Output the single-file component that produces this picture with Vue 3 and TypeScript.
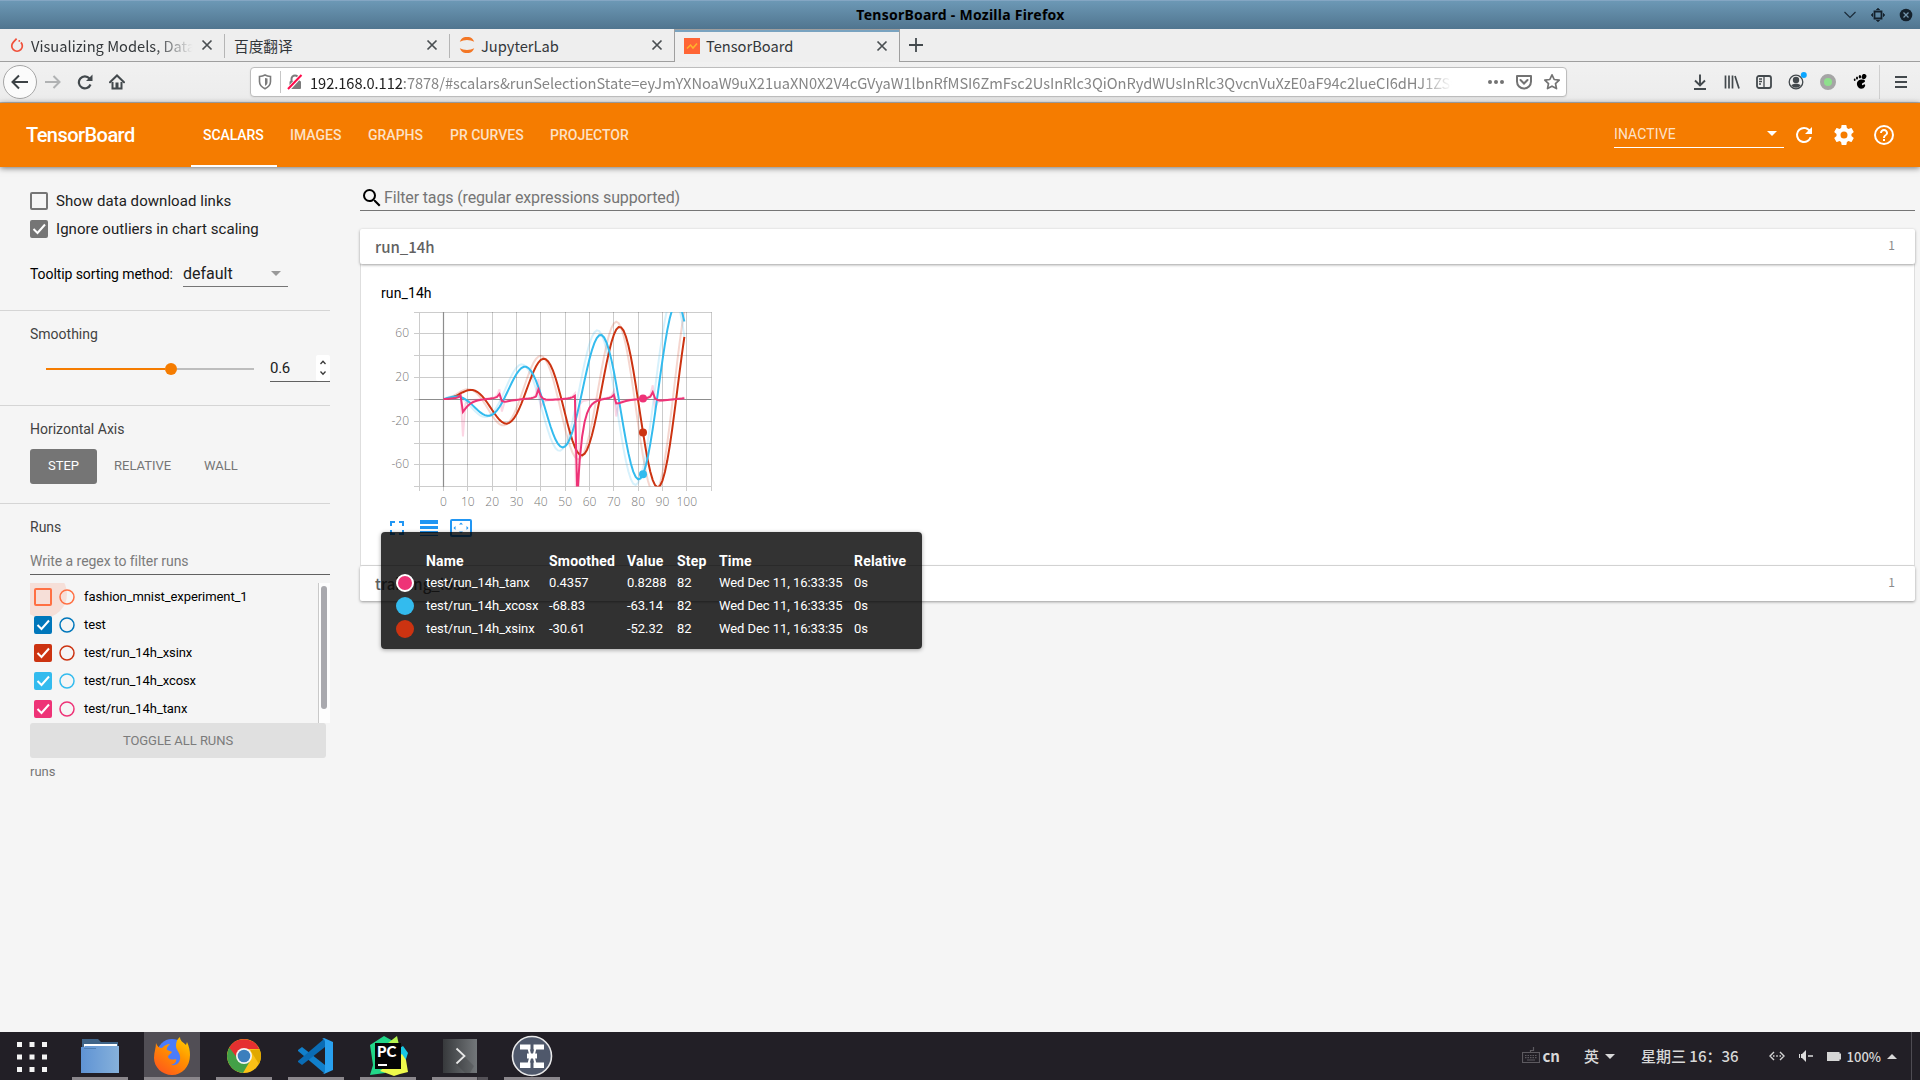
<script setup lang="ts">
interface BrowserTab { title: string; icon: string; width: number; active?: boolean }
interface Run { name: string; color: string; checked: boolean }
interface Series { name: string; color: string; raw: string; smooth: string; dotX: number; dotY: number }

const browserTabs: BrowserTab[] = [
  { title: 'Visualizing Models, Data,', icon: 'torch', width: 225 },
  { title: '百度翻译', icon: '', width: 225 },
  { title: 'JupyterLab', icon: 'jupyter', width: 224 },
  { title: 'TensorBoard', icon: 'board', width: 226, active: true },
]

const host = '192.168.0.112'
const path =
  ':7878/#scalars&runSelectionState=eyJmYXNoaW9uX21uaXN0X2V4cGVyaW1lbnRfMSI6ZmFsc2UsInRlc3QiOnRydWUsInRlc3QvcnVuXzE0aF94c2lueCI6dHJ1ZSw'

const pages = [
  { label: 'SCALARS', width: 86 },
  { label: 'IMAGES', width: 78 },
  { label: 'GRAPHS', width: 82 },
  { label: 'PR CURVES', width: 100 },
  { label: 'PROJECTOR', width: 108 },
]

const runs: Run[] = [
  { name: 'fashion_mnist_experiment_1', color: '#ff7043', checked: false },
  { name: 'test', color: '#0077bb', checked: true },
  { name: 'test/run_14h_xsinx', color: '#cc3311', checked: true },
  { name: 'test/run_14h_xcosx', color: '#33bbee', checked: true },
  { name: 'test/run_14h_tanx', color: '#ee3377', checked: true },
]

const tooltipRows = [
  { color: '#ee3377', near: true, cells: ['test/run_14h_tanx', '0.4357', '0.8288', '82', 'Wed Dec 11, 16:33:35', '0s'] },
  { color: '#33bbee', near: false, cells: ['test/run_14h_xcosx', '-68.83', '-63.14', '82', 'Wed Dec 11, 16:33:35', '0s'] },
  { color: '#cc3311', near: false, cells: ['test/run_14h_xsinx', '-30.61', '-52.32', '82', 'Wed Dec 11, 16:33:35', '0s'] },
]

// Chart scales: the plot area starts at (38, 8) inside the svg.
const sx = (v: number): number => 62.5 + v * 2.433
const sy = (v: number): number => 95.1 - v * 1.0915
const gx = (v: number): number => Math.floor(sx(v)) + 0.5
const gy = (v: number): number => Math.floor(sy(v) + 0.25) + 0.5
const smoothing = 0.6
const hovered = 82

function toPath(values: number[]): string {
  return values.map((v, i) => `${i ? 'L' : 'M'}${sx(i).toFixed(2)} ${sy(v).toFixed(2)}`).join('')
}

function smooth(values: number[]): number[] {
  let last = 0
  return values.map((v, i) => {
    last = last * smoothing + (1 - smoothing) * v
    return last / (1 - Math.pow(smoothing, i + 1))
  })
}

function makeSeries(name: string, color: string, fn: (i: number) => number): Series {
  const values = Array.from({ length: 100 }, (_, i) => fn(i))
  const s = smooth(values)
  return { name, color, raw: toPath(values), smooth: toPath(s), dotX: sx(hovered), dotY: sy(s[hovered]) }
}

const series: Series[] = [
  makeSeries('xsinx', '#cc3311', (i) => i * Math.sin(i / 5)),
  makeSeries('xcosx', '#33bbee', (i) => i * Math.cos(i / 5)),
  makeSeries('tanx', '#ee3377', (i) => Math.tan(i / 5)),
]

const xTicks = Array.from({ length: 13 }, (_, i) => (i - 1) * 10)
const yTicks = Array.from({ length: 9 }, (_, i) => (i - 4) * 20)
const xLabels = Array.from({ length: 11 }, (_, i) => i * 10)
const yLabels = [60, 20, -20, -60]
</script>

<template>
  <div class="screen">
    <header class="titlebar">
      <span class="side"></span>
      <span class="wintitle">TensorBoard - Mozilla Firefox</span>
      <span class="side winbtns">
        <svg width="14" height="14" viewBox="0 0 14 14"><path d="M1.500 4l5.500 5.500L12.500 4" fill="none" stroke="#1c2c3a" stroke-width="1.200" /></svg>
        <svg width="14" height="14" viewBox="0 0 14 14"><path d="M3.500 3.500h7v7h-7z" fill="none" stroke="#14212c" stroke-width="1.800" /><path d="M5.500 1.500L7 0.500l1.500 1zM5.500 12.500L7 13.500l1.500-1zM1.500 5.500L0.500 7l1 1.500zM12.500 5.500L13.500 7l-1 1.500z" fill="#14212c" stroke="#14212c" /></svg>
        <svg width="14" height="14" viewBox="0 0 14 14"><circle cx="7" cy="7" r="6.300" fill="#14212c" /><path d="M4.500 4.500l5 5M9.500 4.500l-5 5" stroke="#7596ad" stroke-width="1.300" /></svg>
      </span>
    </header>

    <nav class="tabstrip">
      <div v-for="t in browserTabs" :key="t.title" class="btab" :class="{ active: t.active }" :style="{ width: t.width + 'px' }">
        <svg v-if="t.icon === 'torch'" class="fav" width="16" height="16" viewBox="0 0 16 16"><path d="M7.600 1.600L4.200 5.300a5.300 5.300 0 1 0 7.700 0" fill="none" stroke="#f0503a" stroke-width="1.700" /><circle cx="10.300" cy="3.900" r=".9" fill="#f0503a" /></svg>
        <svg v-else-if="t.icon === 'jupyter'" class="fav" width="16" height="16" viewBox="0 0 16 16"><path d="M0.800 4.800a7.700 7.700 0 0 1 14.400 0a11 7 0 0 0-14.400 0zM0.800 11.200a7.700 7.700 0 0 0 14.400 0a11 7 0 0 1-14.400 0z" fill="#f37726" /></svg>
        <svg v-else-if="t.icon === 'board'" class="fav" width="16" height="16" viewBox="0 0 16 16"><path d="M0 0h16v16H0z" fill="#ff6535" /><path d="M3 10.500l3.500-3.500 2.500 3L13 5.500" fill="none" stroke="#ffb52b" stroke-width="1.500" /></svg>
        <span class="btitle">{{ t.title }}</span>
        <svg class="close" width="12" height="12" viewBox="0 0 12 12"><path d="M1.500 1.500l9 9M10.500 1.500l-9 9" stroke="#4a4f52" stroke-width="1.700" /></svg>
      </div>
      <div class="newtab"><svg width="14" height="14" viewBox="0 0 14 14"><path d="M7 0v14M0 7h14" stroke="#43494d" stroke-width="1.800" /></svg></div>
    </nav>

    <div class="toolbar">
      <div class="nav">
        <span class="back"><svg width="18" height="16" viewBox="0 0 18 16"><path d="M17 8H2M8 1.500L1.500 8L8 14.500" fill="none" stroke="#3c4245" stroke-width="2" /></svg></span>
        <span class="cell"><svg width="16" height="16" viewBox="0 0 16 16"><path d="M0 8h14M8.500 2l6 6-6 6" fill="none" stroke="#b0b2b3" stroke-width="2" /></svg></span>
        <span class="cell"><svg width="16" height="16" viewBox="0 0 16 16"><path d="M13.500 10.500a6 6 0 1 1-1-6" fill="none" stroke="#43494d" stroke-width="2.200" /><path d="M15.500 0.500v6.500h-6.500z" fill="#43494d" /></svg></span>
        <span class="cell"><svg width="16" height="16" viewBox="0 0 16 16"><path d="M1 8.300L8 1.500l7 6.800" fill="none" stroke="#43494d" stroke-width="2" stroke-linecap="round" /><path d="M3.500 8v6.500h9V8" fill="none" stroke="#43494d" stroke-width="2" /><path d="M6.500 8.500h3V14h-3z" fill="#43494d" /></svg></span>
      </div>
      <div class="urlbar">
        <svg class="shield" width="14" height="16" viewBox="0 0 14 16"><path d="M1.500 2.500C4 2.300 5.500 1.800 7 1c1.500.8 3 1.300 5.500 1.500v5c0 3-2 5.500-5.500 7.200C3.500 13 1.500 10.500 1.500 7.500z" fill="none" stroke="#7b7b7b" stroke-width="1.600" /><path d="M7 4v8M7 4l2.500.6v4c0 1.500-1 2.500-2.500 3.400z" fill="#7b7b7b" /></svg>
        <span class="usep"></span>
        <svg class="lock" width="16" height="16" viewBox="0 0 16 16"><path d="M4.500 8V5a3.500 3.500 0 0 1 7 0v3" fill="none" stroke="#7b7b7b" stroke-width="2" /><rect x="2.500" y="7" width="11.500" height="8" rx="1" fill="#7b7b7b" /><path d="M1.500 15L14.500 1" stroke="#fff" stroke-width="4" /><path d="M1 15L14.500 1" stroke="#ff0a4a" stroke-width="2" /></svg>
        <span class="url"><b>{{ host }}</b>{{ path }}</span>
        <span class="uicons">
          <svg width="18" height="16" viewBox="0 0 18 16"><circle cx="3" cy="8" r="2" fill="#737373" /><circle cx="9" cy="8" r="2" fill="#737373" /><circle cx="15" cy="8" r="2" fill="#737373" /></svg>
          <svg width="18" height="16" viewBox="0 0 18 16"><path d="M2 2h14v5.500a7 7 0 0 1-14 0z" fill="none" stroke="#737373" stroke-width="2" stroke-linejoin="round" /><path d="M5.500 6l3.500 3.500L12.500 6" fill="none" stroke="#737373" stroke-width="2" stroke-linecap="round" /></svg>
          <svg width="18" height="18" viewBox="0 0 18 18"><path d="M9 1.800l2.200 4.700 5 .6-3.700 3.500 1 5L9 13.200 4.500 15.600l1-5L1.800 7.100l5-.6z" fill="none" stroke="#737373" stroke-width="1.700" stroke-linejoin="round" /></svg>
        </span>
      </div>
      <div class="tools">
        <span class="cell"><svg width="16" height="16" viewBox="0 0 16 16"><path d="M8 0.500v10.500M3 6.500l5 5 5-5M2 15h12" fill="none" stroke="#43494d" stroke-width="1.900" /></svg></span>
        <span class="cell"><svg width="16" height="16" viewBox="0 0 16 16"><path d="M1.500 1.500v13M5 1.500v13M8.500 1.500v13M11 2l4 12.500" fill="none" stroke="#43494d" stroke-width="1.700" /></svg></span>
        <span class="cell"><svg width="16" height="16" viewBox="0 0 16 16"><rect x="1" y="2" width="14" height="12" rx="2" fill="none" stroke="#43494d" stroke-width="1.800" /><path d="M8 2v12M3 5h3M3 7.500h3M3 10h2" stroke="#43494d" stroke-width="1.300" /></svg></span>
        <span class="cell"><svg width="22" height="22" viewBox="0 0 22 22"><circle cx="11" cy="11" r="6.800" fill="none" stroke="#43494d" stroke-width="1.300" /><circle cx="11" cy="9" r="3.200" fill="#43494d" /><path d="M6.300 14.500c1-2.500 8.400-2.500 9.400 0a6 6 0 0 1-9.400 0z" fill="#43494d" /><circle cx="18.800" cy="4" r="3" fill="#0aa5ff" /></svg></span>
        <span class="cell"><svg width="16" height="16" viewBox="0 0 16 16"><circle cx="8" cy="8" r="6" fill="#8ee08c" stroke="#a5a5a5" stroke-width="4" /></svg></span>
        <span class="cell"><svg width="16" height="16" viewBox="0 0 16 16"><ellipse cx="12" cy="2.600" rx="2.300" ry="2.700" transform="rotate(25 12 2.600)" /><ellipse cx="7.900" cy="2.700" rx="1.200" ry="1.800" /><ellipse cx="5" cy="4" rx="1" ry="1.500" /><ellipse cx="2.700" cy="5.800" rx=".9" ry="1.200" /><path d="M9 5.500c2.800-.4 5 .7 3.800 2.300-1 1.200-3 1.200-2.900 2.500.2 1 1.300 1.200 1.700.3.500-1 2.200-.2 1.400 1.700-1 2.700-4.600 3.300-6.300 1.500C4.500 11.500 3.500 6.500 9 5.500z" /></svg></span>
        <span class="tsep"></span>
        <span class="menu"><svg width="14" height="14" viewBox="0 0 14 14"><path d="M1 2h12M1 7h12M1 12h12" stroke="#43494d" stroke-width="2" /></svg></span>
      </div>
    </div>

    <header class="appbar">
      <h1>TensorBoard</h1>
      <nav class="pages">
        <span v-for="(p, i) in pages" :key="p.label" class="page" :class="{ on: i === 0 }" :style="{ width: p.width + 'px' }">{{ p.label }}</span>
      </nav>
      <div class="inactive"><span>INACTIVE</span><i class="caret"></i></div>
      <div class="actions">
        <svg width="24" height="24" viewBox="0 0 24 24"><path d="M17.650 6.350A7.958 7.958 0 0 0 12 4a8 8 0 1 0 7.730 10h-2.080A6 6 0 1 1 12 6c1.660 0 3.140.69 4.220 1.780L13 11h7V4z" /></svg>
        <svg width="24" height="24" viewBox="0 0 24 24"><path d="M19.430 12.980c.04-.32.07-.64.07-.98s-.03-.66-.07-.98l2.110-1.650c.19-.15.24-.42.12-.64l-2-3.460c-.12-.22-.39-.3-.61-.22l-2.490 1c-.52-.4-1.080-.73-1.690-.98l-.38-2.650A.488.488 0 0 0 14 2h-4c-.25 0-.46.180-.49.420l-.38 2.650c-.61.25-1.170.59-1.690.98l-2.490-1c-.23-.09-.49 0-.61.22l-2 3.460c-.13.22-.07.49.12.64l2.110 1.650c-.04.32-.07.65-.07.98s.03.66.07.98l-2.110 1.650c-.19.15-.24.42-.12.64l2 3.460c.12.22.39.3.61.22l2.490-1c.52.4 1.080.73 1.690.98l.38 2.650c.03.24.24.42.49.42h4c.25 0 .46-.18.49-.42l.38-2.650c.61-.25 1.170-.59 1.690-.98l2.490 1c.23.09.49 0 .61-.22l2-3.460c.12-.22.07-.49-.12-.64zM12 15.500a3.500 3.500 0 1 1 0-7 3.500 3.500 0 0 1 0 7z" /></svg>
        <svg width="24" height="24" viewBox="0 0 24 24"><path d="M11 18h2v-2h-2v2zm1-16a10 10 0 1 0 0 20 10 10 0 0 0 0-20zm0 18a8 8 0 1 1 0-16 8 8 0 0 1 0 16zm0-14c-2.210 0-4 1.790-4 4h2c0-1.100.9-2 2-2s2 .9 2 2c0 2-3 1.750-3 5h2c0-2.250 3-2.500 3-5 0-2.210-1.790-4-4-4z" /></svg>
      </div>
    </header>

    <div class="workspace">
      <aside class="sidebar">
        <section class="options">
          <label class="check"><span class="box"></span>Show data download links</label>
          <label class="check"><span class="box filled"><svg width="18" height="18" viewBox="0 0 18 18"><path d="M3.500 9l4 4L15 4.500" fill="none" stroke="#fff" stroke-width="2" /></svg></span>Ignore outliers in chart scaling</label>
          <div class="sorting"><span>Tooltip sorting method:</span><div class="select">default<i class="caret"></i></div></div>
        </section>
        <section class="smoothing">
          <h3>Smoothing</h3>
          <div class="sliderrow">
            <div class="slider"><i class="done"></i><i class="knob"></i><i class="rest"></i></div>
            <div class="number"><span>0.6</span>
              <svg width="14" height="26" viewBox="0 0 14 26"><rect width="14" height="26" rx="2" fill="#fff" /><path d="M4.500 9L7 6.200 9.500 9M4.500 16.500L7 19.200l2.500-2.700" fill="none" stroke="#3a3a3a" stroke-width="1.300" /></svg>
            </div>
          </div>
        </section>
        <section class="axis">
          <h3>Horizontal Axis</h3>
          <div class="buttons"><span class="step">STEP</span><span class="rel">RELATIVE</span><span class="wall">WALL</span></div>
        </section>
        <section class="runs">
          <h3>Runs</h3>
          <div class="regex">Write a regex to filter runs</div>
          <div class="listwrap">
            <div class="list">
              <div v-for="(r, i) in runs" :key="r.name" class="run">
                <i v-if="i === 0" class="ripple"></i>
                <span class="box" :style="{ borderColor: r.color, background: r.checked ? r.color : 'transparent' }">
                  <svg v-if="r.checked" width="18" height="18" viewBox="0 0 18 18"><path d="M3.500 9l4 4L15 4.500" fill="none" stroke="#fff" stroke-width="2" /></svg>
                </span>
                <svg class="ring" width="16" height="16" viewBox="0 0 16 16"><circle cx="8" cy="8" r="7" fill="none" :stroke="r.color" stroke-width="1.500" /></svg>
                <span class="rname">{{ r.name }}</span>
              </div>
            </div>
            <div class="scroll"><i></i></div>
          </div>
          <div class="toggle">TOGGLE ALL RUNS</div>
          <div class="logdir">runs</div>
        </section>
      </aside>

      <main class="content">
        <div class="search">
          <svg width="24" height="24" viewBox="0 0 24 24"><path d="M15.500 14h-.79l-.28-.27A6.471 6.471 0 0 0 16 9.500 6.500 6.500 0 1 0 9.500 16c1.610 0 3.090-.59 4.230-1.570l.27.280v.79l5 4.990L20.490 19l-4.990-5zm-6 0C7.010 14 5 11.990 5 9.500S7.010 5 9.500 5 14 7.010 14 9.500 11.990 14 9.500 14z" /></svg>
          <span>Filter tags (regular expressions supported)</span>
        </div>
        <div class="cathead"><span>run_14h</span><em>1</em></div>
        <div class="catbody">
          <div class="charttitle">run_14h</div>
          <svg class="chart" width="350" height="206" viewBox="0 0 350 206">
            <defs><clipPath id="plot"><rect x="38" y="8" width="292" height="174.500" /></clipPath></defs>
            <g stroke="#000" stroke-opacity=".2" stroke-width="1">
              <path v-for="x in xTicks" :key="'x' + x" :d="`M${gx(x)} 8V182.500`" />
              <path v-for="y in yTicks" :key="'y' + y" :d="`M38 ${gy(y)}H330.500`" />
            </g>
            <g stroke="#ccc" stroke-width="1">
              <path d="M38.500 8V187M33 182.500H330" />
              <path v-for="x in xTicks" :key="'tx' + x" :d="`M${gx(x)} 183v4`" />
              <path v-for="y in yTicks" :key="'ty' + y" :d="`M33 ${gy(y)}h5`" />
            </g>
            <path :d="`M${gx(0)} 8V183M38 ${gy(0)}H330`" stroke="#8d8d8d" stroke-width="1.200" />
            <g clip-path="url(#plot)" fill="none">
              <path v-for="s in series" :key="'r' + s.name" :d="s.raw" :stroke="s.color" stroke-opacity=".2" stroke-width="2" />
              <path v-for="s in series" :key="'s' + s.name" :d="s.smooth" :stroke="s.color" stroke-width="2" />
            </g>
            <circle v-for="s in series" :key="'d' + s.name" :cx="s.dotX" :cy="s.dotY" r="4" :fill="s.color" />
            <g class="ticks">
              <text v-for="y in yLabels" :key="y" x="28" :y="sy(y) + 3.600" text-anchor="end">{{ y }}</text>
              <text v-for="x in xLabels" :key="x" :x="sx(x)" y="202" text-anchor="middle">{{ x }}</text>
            </g>
          </svg>
          <div class="charticons">
            <svg width="14" height="14" viewBox="0 0 14 14"><path d="M1 5V1h4M9 1h4v4M13 9v4H9M5 13H1V9" fill="none" stroke="#2196f3" stroke-width="2" /></svg>
            <svg width="18" height="16" viewBox="0 0 18 16"><path d="M0 0h18v4H0zM0 6h18v3H0zM0 11h18v2H0zM0 15h18v1H0z" fill="#2196f3" /></svg>
            <svg width="22" height="18" viewBox="0 0 22 18"><rect x="1" y="1" width="20" height="16" rx="1" fill="none" stroke="#2196f3" stroke-width="2" /><path d="M11 3.500L9 5.500h4zM11 14.500l-2-2h4zM3.500 9l2-2v4zM18.500 9l-2-2v4z" fill="#2196f3" /></svg>
          </div>
          <div class="tooltip">
            <table>
              <thead><tr><th></th><th>Name</th><th>Smoothed</th><th>Value</th><th>Step</th><th>Time</th><th>Relative</th></tr></thead>
              <tbody>
                <tr v-for="r in tooltipRows" :key="r.cells[0]">
                  <td><i class="swatch" :class="{ near: r.near }" :style="{ background: r.color }"></i></td>
                  <td v-for="(c, i) in r.cells" :key="i">{{ c }}</td>
                </tr>
              </tbody>
            </table>
          </div>
        </div>
        <div class="cathead second"><span>training_loss</span><em>1</em></div>
      </main>
    </div>

    <footer class="taskbar">
      <div class="launch"><svg width="32" height="32" viewBox="0 0 32 32"><path v-for="n in 9" :key="n" :d="`M${1 + ((n - 1) % 3) * 12.500} ${1 + Math.floor((n - 1) / 3) * 12.500}h5v5h-5z`" fill="#f4f4f4" /></svg></div>
      <div class="task"><svg width="38" height="36" viewBox="0 0 38 36"><defs><linearGradient id="fold"><stop offset="0" stop-color="#5f93d4" /><stop offset="1" stop-color="#86b1db" /></linearGradient></defs><path d="M1 1h16l3 3h17v16H1z" fill="#3f6488" /><path d="M3 6h33v5H3z" fill="#fff" /><path d="M0 9h3l1-1h34v27H0z" fill="url(#fold)" /><path d="M3 10.500h12" stroke="#4d7fb5" /></svg></div>
      <div class="task current"><svg width="38" height="40" viewBox="0 0 38 40"><defs><linearGradient id="fox" x1="1" y1="0" x2="0.300" y2="1"><stop offset="0" stop-color="#ffd500" /><stop offset=".5" stop-color="#ff9000" /><stop offset="1" stop-color="#ff5b1a" /></linearGradient></defs><circle cx="19" cy="18" r="15" fill="#4a7cfa" /><path d="M3 7c1 3 3 5 6 5 3-3 5-4 8-4-2 2-4 4-3 6 2 1 4 1 5 2-1 2-4 3-4 5 1 3 6 3 8 2 1 2-1 5-5 6 6 1 10-3 9-9-1-5-4-6-4-10 0-4 1-7 4-9 0 4 3 5 6 8l1-3c2 4 3 9 3 13C37 31 29 39 19 39S1 31 1 22C1 16 3 12 3 7z" fill="url(#fox)" /></svg></div>
      <div class="task"><svg width="36" height="36" viewBox="0 0 36 36"><circle cx="18" cy="18" r="17" fill="#fbc116" /><path d="M18 18L3.300 9.500A17 17 0 0 0 17 35l7-12z" fill="#43a047" /><path d="M3.300 9.500A17 17 0 0 1 33.300 11H18l-6 10z" fill="#e53030" /><path d="M24 12l9.600-.5A17 17 0 0 1 33 26z" fill="#e0a800" /><circle cx="18" cy="18" r="8" fill="#f5f5f5" /><circle cx="18" cy="18" r="6.300" fill="#3c7fbd" /></svg></div>
      <div class="task"><svg width="36" height="36" viewBox="0 0 36 36"><path d="M0 12l4-3 23 18v8h-1L0 13z" fill="#1180cc" /><path d="M0 24l4 3L27 9V1h-1L0 23z" fill="#0a6cb5" /><path d="M26 0l9 4v28l-9 4-2-1c2 1 3 0 3-2V4c0-2-1-3-3-3z" fill="#29a0ef" /></svg></div>
      <div class="task"><svg class="pc" width="40" height="42" viewBox="0 0 40 42"><path d="M2 10L16 1l9 5 4 10-12 22-15 2 3-10z" fill="#21d789" /><path d="M20 8l9-7 2 9-3 6z" fill="#b6f34e" /><path d="M30 14l5-3 5 7-4 12-8-3z" fill="#19c9e4" /><path d="M12 36l10-9 12-8 4 6 2 12-8 2-6 2-8-3z" fill="#eef94b" /><rect x="7" y="8" width="26" height="26" fill="#050505" /><path d="M10 30h9" stroke="#fff" stroke-width="2" /><text x="9" y="22" fill="#fff" font-family="Lato, sans-serif" font-weight="900" font-size="15">PC</text></svg></div>
      <div class="task split"><svg width="34" height="34" viewBox="0 0 34 34"><defs><linearGradient id="term"><stop offset="0" stop-color="#37393c" /><stop offset="1" stop-color="#73777a" /></linearGradient></defs><path d="M0 0h34v34H0z" fill="url(#term)" /><path d="M21 17l-8 8 9 9h5l4-7z" fill="#000" opacity=".12" /><path d="M13.500 9.500l8 7.500-8 7.500" fill="none" stroke="#e8e8e8" stroke-width="1.800" /></svg></div>
      <div class="task"><svg width="42" height="42" viewBox="0 0 42 42"><circle cx="21" cy="21" r="19.500" fill="#4f586b" stroke="#e9e9ea" stroke-width="1.600" /><path d="M9 9.500h10.500v5H9zM22.500 9.500H33v5H22.500zM16 18.500h10v5H16zM9 27.500h10.500v5.500H9zM22.500 27.500H33v5.500H22.500z" fill="#fff" /><path d="M17.500 13l2 8-2 8M24.500 13l-2 8 2 8" fill="none" stroke="#fff" stroke-width="2" /></svg></div>
      <div class="tray">
        <svg width="18" height="18" viewBox="0 0 18 18"><path d="M.5 5.500h17v10H.5zM8.500 5.500V3.500h3V0M5 13h8" fill="none" stroke="#5d5a60" stroke-width="1.200" /><path d="M3 8.500h12M3 10.700h12" fill="none" stroke="#5d5a60" stroke-width="1.200" stroke-dasharray="1.500 1" /></svg>
        <b class="cn">cn</b>
        <b class="ying">英</b><i class="down"></i>
        <b class="clock">星期三 16：36</b>
        <svg class="net" width="16" height="10" viewBox="0 0 16 10"><path d="M5 1L1 5l4 4M11 1l4 4-4 4M4 5h1.500M7.200 5h1.600M10.500 5H12" fill="none" stroke="#d5d5d5" stroke-width="1.400" /></svg>
        <svg class="vol" width="14" height="12" viewBox="0 0 14 12"><path d="M0 4h1v4H0zM2 4h1l4-4v12L3 8H2zM9 5.300h5v1.500H9z" fill="#dcdcdc" /></svg>
        <svg class="bat" width="14" height="9" viewBox="0 0 14 9"><path d="M0 0h12.500v1.500H14v6h-1.500V9H0z" fill="#d5d5d5" /></svg>
        <span class="pct">100%</span><i class="up"></i><span class="edge"></span>
      </div>
    </footer>
  </div>
</template>

<style>
body { background: #f5f5f5; overflow: hidden; }
</style>

<style scoped>
* { box-sizing: border-box; }
.screen { width: 1920px; height: 1080px; display: flex; flex-direction: column; background: #f5f5f5; font-family: Roboto, sans-serif; overflow: hidden; }
svg { display: block; flex: none; }
i, em { font-style: normal; }
.titlebar { height: 29px; flex: none; display: flex; align-items: center; background: linear-gradient(#6c98b5, #50758f); border-top: 1px solid #84a6c3; }
.side { flex: 1; padding-left: 8px; }
.wintitle { font: 700 14px "Noto Sans", sans-serif; letter-spacing: .25px; color: #000; white-space: nowrap; margin-top: -2px; }
.winbtns { display: flex; justify-content: flex-end; gap: 14px; padding: 0 7px 0 0; }
.tabstrip { height: 33px; flex: none; display: flex; background: #eee; }
.btab { height: 33px; display: flex; align-items: center; padding: 0 12px 0 9px; border-bottom: 1px solid #9f9f9f; position: relative; font: 14.670px "Noto Sans CJK SC", sans-serif; color: #33373a; }
.btab::after { content: ""; width: 1px; height: 24px; background: #b5b5b5; position: absolute; right: 0; top: 5px; }
.btab.active::after, .btab:nth-child(3)::after { display: none; }
.btab:nth-child(3) { padding-right: 11px; }
.btab.active { border: 1px solid #9f9f9f; border-bottom: 0; background: #efefef; box-shadow: inset 0 2px #79a3c0; padding-right: 11px; }
.fav { margin-right: 6px; }
.btitle { flex: 1; min-width: 0; white-space: nowrap; line-height: 24px; padding-top: 1px; }
.btab.active .btitle { padding-top: 0; }
.btab:first-child .btitle { -webkit-mask-image: linear-gradient(90deg, #000 75%, transparent 98%); mask-image: linear-gradient(90deg, #000 75%, transparent 98%); }
.close { margin-left: 5px; }
.newtab { flex: 1; border-bottom: 1px solid #9f9f9f; padding: 9px; }
.toolbar { height: 41px; flex: none; display: flex; align-items: center; background: linear-gradient(#f1f1f1, #ececec); border-bottom: 1px solid #b9b9b9; }
.nav { display: flex; align-items: center; width: 250px; padding-left: 3px; }
.back { width: 34px; height: 34px; border-radius: 50%; border: 1px solid #a6a6a6; background: #fbfbfb; display: flex; align-items: center; justify-content: center; }
.cell { width: 32px; display: flex; justify-content: center; }
.urlbar { width: 1317px; height: 30px; border: 1px solid #bdbdbd; border-radius: 4px; background: #fff; display: flex; align-items: center; padding-left: 7px; box-shadow: 0 1px 2px rgba(0, 0, 0, .08); }
.usep { width: 1px; height: 22px; background: #c6c6c6; margin: 0 6px 0 8px; }
.url { width: 1144px; margin-left: 7px; padding-top: 2px; white-space: nowrap; font: 14.670px/24px "Noto Sans CJK SC", sans-serif; letter-spacing: -.055px; color: #868686; -webkit-mask-image: linear-gradient(90deg, #000 97%, transparent 99.800%); mask-image: linear-gradient(90deg, #000 97%, transparent 99.800%); }
.url b { font-weight: 400; color: #222; }
.uicons { display: flex; align-items: center; gap: 10px; margin-left: 33px; }
.tools { flex: 1; display: flex; align-items: center; padding-left: 117px; }
.tsep { width: 1px; height: 34px; background: #cfcfcf; margin: 0 14px 0 3px; }
.appbar { height: 64px; flex: none; display: flex; align-items: center; background: #f57c00; color: #fff; box-shadow: 0 1px 6px rgba(0, 0, 0, .55); position: relative; }
h1 { margin: 0; width: 191px; padding-left: 26px; font-size: 20px; font-weight: 500; letter-spacing: -.55px; line-height: 24px; }
.pages { display: flex; flex: 1; height: 64px; }
.page { padding-left: 12px; font-size: 14px; font-weight: 500; line-height: 64px; color: rgba(255, 255, 255, .78); white-space: nowrap; }
.page.on { color: #fff; border-bottom: 2px solid #fff; margin-right: 1px; letter-spacing: -.08px; }
.inactive { width: 170px; height: 27px; margin-top: -2px; border-bottom: 1px solid #fff; display: flex; align-items: center; justify-content: space-between; font-size: 14px; letter-spacing: .1px; color: rgba(255, 255, 255, .8); padding-right: 7px; }
.caret { border: 5px solid transparent; border-top-color: #fff; border-bottom: 0; }
.actions { display: flex; gap: 16px; padding: 0 24px 0 8px; }
.actions svg { fill: #fff; }
.workspace { flex: 1; display: flex; min-height: 0; }
.sidebar { width: 330px; flex: none; color: #212121; }
.options { padding: 20px 0 0 30px; height: 144px; border-bottom: 1px solid #d5d5d5; }
.check { display: flex; align-items: center; height: 28px; font-size: 15px; letter-spacing: .05px; }
.box { width: 18px; height: 18px; border: 2px solid #757575; border-radius: 2px; margin-right: 8px; flex: none; position: relative; }
.box svg { margin: -2px; }
.box.filled { background: #757575; }
.sorting { display: flex; align-items: center; margin-top: 18px; font-size: 14px; color: #000; height: 26px; }
.sorting > span { width: 143px; letter-spacing: -.09px; white-space: nowrap; }
.select { width: 105px; height: 26px; margin-left: 10px; border-bottom: 1px solid #757575; font-size: 16px; line-height: 24px; color: #212121; display: flex; align-items: center; justify-content: space-between; padding-right: 7px; }
.select .caret { border-top-color: #999; }
h3 { margin: 0; font-size: 14px; font-weight: 400; color: #424242; line-height: 20px; }
.smoothing { height: 95px; padding: 13px 0 0 30px; border-bottom: 1px solid #d5d5d5; }
.sliderrow { display: flex; align-items: center; margin-top: 11px; height: 27px; }
.slider { width: 208px; margin: 0 16px; display: flex; align-items: center; }
.done { width: 119px; height: 2px; background: #f57c00; }
.knob { width: 12px; height: 12px; border-radius: 50%; background: #f57c00; }
.rest { flex: 1; height: 2px; background: #bdbdbd; }
.number { width: 60px; height: 27px; border-bottom: 1px solid #616161; display: flex; justify-content: space-between; align-items: center; font-size: 15px; }
.number span { letter-spacing: -.3px; }
.axis { height: 98px; padding: 13px 0 0 30px; border-bottom: 1px solid #d5d5d5; }
.buttons { display: flex; margin-top: 10px; font-size: 13px; line-height: 34px; color: #757575; }
.step { width: 67px; height: 35px; border-radius: 3px; background: #757575; color: #fff; text-align: center; }
.rel { margin-left: 17px; width: 90px; }
.runs { padding: 13px 0 0 30px; }
.regex { height: 24px; margin: 14px 0 8px; border-bottom: 1px solid #616161; font-size: 14px; line-height: 20px; color: #7b7b7b; letter-spacing: -.05px; }
.listwrap { display: flex; height: 140px; overflow: hidden; }
.list { width: 288px; position: relative; overflow: hidden; }
.run { height: 28px; display: flex; align-items: center; padding-left: 4px; font-size: 13px; color: #000; }
.run .box { margin-right: 7px; }
.rname { letter-spacing: -.08px; margin-top: -2px; }
.ripple { position: absolute; left: -11px; top: -13px; width: 48px; height: 48px; border-radius: 50%; background: rgba(255, 112, 67, .16); }
.ring { margin-right: 9px; }
.scroll { width: 12px; background: #fdfdfd; border-left: 1px solid #c9c9c9; padding: 3px 2px; }
.scroll i { display: block; width: 6px; height: 123px; border-radius: 3px; background: #a9a9ae; }
.toggle { width: 296px; height: 35px; background: #e0e0e0; border-radius: 3px; text-align: center; line-height: 35px; font-size: 13px; letter-spacing: -.05px; color: #7b7b7b; }
.logdir { font-size: 13px; color: #757575; line-height: 16px; margin-top: 6px; }
.content { width: 1555px; margin-left: 30px; padding-top: 18px; }
.search { height: 26px; border-bottom: 1px solid #757575; display: flex; align-items: center; font-size: 16px; letter-spacing: -.14px; color: #757575; }
.cathead { height: 35px; margin-top: 18px; background: #fff; display: flex; justify-content: space-between; align-items: center; padding: 0 20px 0 15px; box-shadow: 0 1px 3px rgba(0, 0, 0, .38); font: 500 15px/24px "Noto Sans CJK SC", sans-serif; color: #616161; position: relative; border-radius: 2px; z-index: 1; }
.cathead em { font: 12px/18px "Noto Sans CJK SC", sans-serif; color: #8a8a8a; margin-top: -3px; }
.cathead.second { margin-top: 0; z-index: 0; }
.catbody { height: 302px; background: #fff; border: 1px solid #dedede; border-top: 0; padding: 19px 0 0 20px; position: relative; z-index: auto; }
.charttitle { font-size: 14px; line-height: 20px; color: #000; letter-spacing: .1px; }
.chart { margin-top: 1px; }
.ticks { font: 300 12px "Open Sans", sans-serif; fill: #777; }
.charticons { display: flex; align-items: center; margin: 9px 0 0 9px; height: 18px; }
.charticons svg:nth-child(2) { margin: 0 12px 0 16px; }
.tooltip { position: absolute; z-index: 3; left: 20px; top: 268px; width: 541px; height: 117px; border-radius: 4px; background: rgba(0, 0, 0, .8); box-shadow: 0 1px 4px rgba(0, 0, 0, .35); color: #fff; padding: 18px 0 0 13px; }
table { border-collapse: collapse; table-layout: fixed; width: 528px; font-size: 13px; }
th, td { padding: 0; text-align: left; white-space: nowrap; }
th { font-size: 14px; font-weight: 700; height: 21px; letter-spacing: .2px; }
td { height: 23px; letter-spacing: -.06px; }
th:nth-child(1) { width: 32px; }
th:nth-child(2) { width: 123px; }
th:nth-child(3) { width: 78px; }
th:nth-child(4) { width: 50px; }
th:nth-child(5) { width: 42px; }
th:nth-child(6) { width: 135px; }
.swatch { display: block; width: 18px; height: 18px; border-radius: 50%; margin-left: 2px; }
.swatch.near { border: 2px solid #fff; }
.taskbar { height: 48px; flex: none; display: flex; background: #221f26; }
.launch { width: 72px; padding: 9px 0 0 16px; }
.task { width: 56px; height: 48px; margin-right: 16px; border-bottom: 3px solid #8b878c; display: flex; align-items: center; justify-content: center; }
.task svg { margin-bottom: -3px; }
.current { background: #514e55; }
.split { border-image: linear-gradient(90deg, #8b878c 43px, #221f26 43px, #555258 44px) 3; border-bottom-width: 3px; }
.tray { flex: 1; display: flex; align-items: center; justify-content: flex-end; color: #d8d8d8; font: 15px "Noto Sans CJK SC", sans-serif; }
.tray b { font-weight: 500; line-height: 24px; }
.tray .cn { margin-left: 2px; font-weight: 700; }
.ying { margin-left: 24px; }
.down { border: 5px solid transparent; border-top-color: #d8d8d8; border-bottom: 0; margin-left: 6px; }
.clock { margin: 0 30px 0 26px; white-space: nowrap; }
.vol { margin: 0 14px; }
.pct { margin: 0 6px; font-size: 13px; font-weight: 500; }
.up { border: 5px solid transparent; border-bottom-color: #d8d8d8; border-top: 0; }
.edge { width: 1px; height: 48px; background: #4e4b52; margin: 0 8px 0 14px; }
</style>
